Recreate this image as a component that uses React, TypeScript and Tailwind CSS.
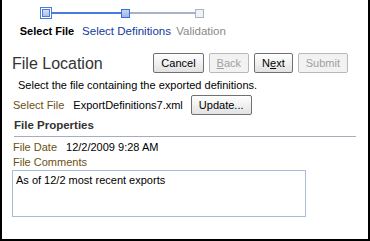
import { useState } from 'react';

const font = { fontFamily: '"Liberation Sans", Arial, sans-serif' };

function Button({ label, mnemonic, disabled }: { label: string; mnemonic?: number; disabled?: boolean }) {
  const chars = label.split('');
  return (
    <button
      disabled={disabled}
      className={`h-[20px] px-[7px] text-[11px] leading-none border rounded-[2px] ${
        disabled
          ? 'border-[#b8b8b8] text-[#a0a0a0] bg-[#f2f2f2]'
          : 'border-[#707070] text-black bg-gradient-to-b from-white to-[#e2e2e2]'
      }`}
    >
      {chars.map((c, i) => (
        <span key={i} className={i === mnemonic ? 'underline' : ''}>
          {c}
        </span>
      ))}
    </button>
  );
}

export default function App() {
  const [comments, setComments] = useState('As of 12/2 most recent exports');

  return (
    <div style={font} className="w-[370px] h-[241px] bg-white border-l-2 border-r-2 border-b-2 border-black overflow-hidden">
      {/* train */}
      <div className="flex items-center pt-[7px] pl-[38px] h-[19px]">
        <div className="w-[12px] h-[12px] border border-[#4a7ce0] p-[1px] bg-white">
          <div className="w-full h-full border border-[#4a7ce0] bg-gradient-to-b from-[#d6e0f3] to-[#aabfe6]" />
        </div>
        <div className="w-[69px] h-[2px] bg-[#4a7ce0]" />
        <div className="w-[9px] h-[9px] border border-[#3d6be0] bg-gradient-to-b from-[#c5d4f0] to-[#9db5e5]" />
        <div className="w-[65px] h-[2px] bg-[#a7b3ca]" />
        <div className="w-[9px] h-[9px] border border-[#aab3c4] bg-[#f0f2f6]" />
      </div>
      <div className="flex mt-[5px] text-[11.5px] leading-[14px] whitespace-nowrap">
        <div className="w-[80px] ml-[5px] flex justify-center font-bold text-[11px] text-black">Select File</div>
        <div className="w-[79px] flex justify-center text-[#103c9c]">Select Definitions</div>
        <div className="w-[70px] flex justify-center text-[#8a8a8a]">Validation</div>
      </div>

      {/* header */}
      <div className="flex items-center justify-between pl-[10px] pr-[20px] mt-[15px] h-[20px]">
        <h1 className="text-[16px] text-[#333] pt-[2px]">File Location</h1>
        <div className="flex gap-[5px]">
          <Button label="Cancel" />
          <Button label="Back" mnemonic={0} disabled />
          <Button label="Next" mnemonic={1} />
          <Button label="Submit" disabled />
        </div>
      </div>

      <p className="pl-[16px] mt-[5px] text-[11px] text-black leading-[14px]">
        Select the file containing the exported definitions.
      </p>

      <div className="flex items-center pl-[11px] mt-[2px] h-[22px] text-[11px]">
        <span className="text-[#6b5012]">Select File</span>
        <span className="ml-[9px] text-black">ExportDefinitions7.xml</span>
        <div className="ml-[8px]">
          <Button label="Update..." />
        </div>
      </div>

      <div className="mx-[12px] mt-[2px] border-b border-[#a6adbb] pb-[4px]">
        <h2 className="text-[11.5px] font-bold text-[#333] leading-[14px]">File Properties</h2>
      </div>

      <div className="flex pl-[11px] mt-[3px] text-[11px] leading-[14px]">
        <span className="text-[#6b5012]">File Date</span>
        <span className="ml-[9px] text-black">12/2/2009 9:28 AM</span>
      </div>

      <div className="pl-[11px] mt-[1px] text-[11px] leading-[14px] text-[#6b5012]">File Comments</div>
      <div className="pl-[10px] mt-[1px]">
        <textarea
          value={comments}
          onChange={(e) => setComments(e.target.value)}
          className="block w-[294px] h-[47px] border border-[#a9bcd8] px-[3px] py-[2px] text-[11px] leading-[14px] text-black resize-none outline-none"
          style={font}
        />
      </div>
    </div>
  );
}
